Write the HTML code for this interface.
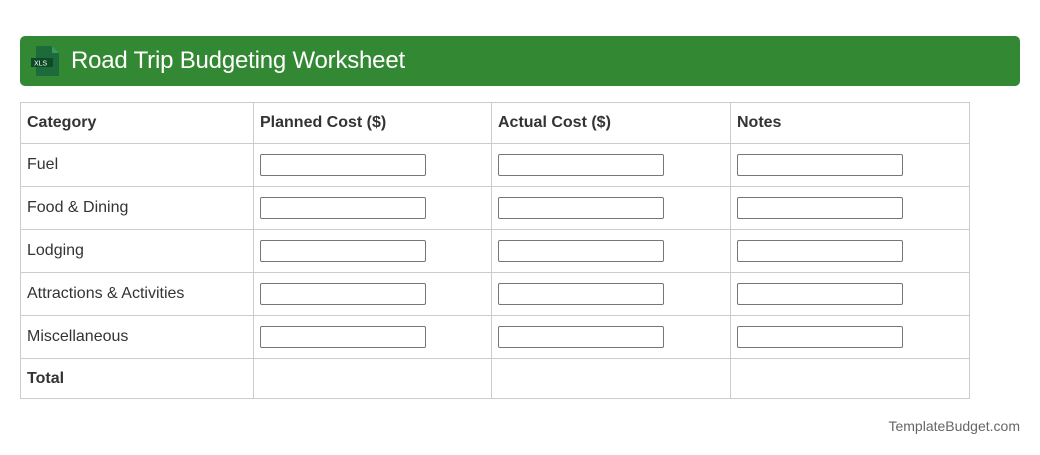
<!DOCTYPE html>
<html><head><meta charset="utf-8"><style>
*{box-sizing:border-box;margin:0;padding:0}
body{width:1040px;height:455px;background:#fff;font-family:"Liberation Sans",sans-serif;color:#333;position:relative;overflow:hidden}
.hdr{position:absolute;left:20px;top:36px;width:1000px;height:50px;background:#338833;border-radius:5px}
.hdr svg{position:absolute;left:11px;top:10px}
.hdr h1{position:absolute;left:51px;top:11px;font-size:24px;font-weight:normal;color:#fff;letter-spacing:-0.2px}
table{position:absolute;left:20px;top:102px;border-collapse:collapse;font-size:16px;width:949px;table-layout:fixed}
td{border:1px solid #ccc;padding:0 6px;vertical-align:middle}
tr{height:43px}
tr.h{height:41px}
tr.t{height:40px}
.b{font-weight:bold}
input{display:block;width:166px;height:22px;border:1px solid #767676;border-radius:2px;background:#fff;margin-top:-1px}
.f{position:absolute;right:20px;top:418px;font-size:14px;color:#666}
</style></head><body>
<div class="hdr">
<svg width="30" height="31" viewBox="0 0 30 31"><path d="M6 0H21L28 7V29Q28 30 27 30H6Q5 30 5 29V1Q5 0 6 0Z" fill="#1d6b3b"/><path d="M21 0V7H28Z" fill="#3a9a5e"/><rect x="0" y="12" width="22" height="9" fill="#0f4a26"/><text x="3" y="19.5" font-size="7" fill="#fff" font-family="Liberation Sans,sans-serif">XLS</text></svg>
<h1>Road Trip Budgeting Worksheet</h1>
</div>
<table>
<colgroup><col style="width:233px"><col style="width:238px"><col style="width:239px"><col style="width:239px"></colgroup>
<tr class="h b"><td>Category</td><td>Planned Cost ($)</td><td>Actual Cost ($)</td><td>Notes</td></tr>
<tr><td>Fuel</td><td><input></td><td><input></td><td><input></td></tr>
<tr><td>Food &amp; Dining</td><td><input></td><td><input></td><td><input></td></tr>
<tr><td>Lodging</td><td><input></td><td><input></td><td><input></td></tr>
<tr><td>Attractions &amp; Activities</td><td><input></td><td><input></td><td><input></td></tr>
<tr><td>Miscellaneous</td><td><input></td><td><input></td><td><input></td></tr>
<tr class="t"><td class="b">Total</td><td></td><td></td><td></td></tr>
</table>
<div class="f">TemplateBudget.com</div>
</body></html>
